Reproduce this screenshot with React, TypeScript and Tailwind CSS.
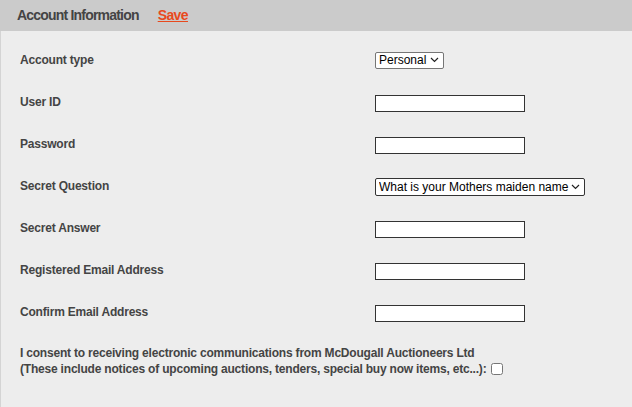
import React from 'react';

const labelCls = "text-[12px] font-bold text-[#444] tracking-[-0.2px]";
const inputCls = "block w-[150px] h-[17px] bg-white border border-[#333] outline-none";

function Chevron() {
  return (
    <svg className="absolute right-[5px] top-1/2 -translate-y-1/2 pointer-events-none" width="9" height="6" viewBox="0 0 9 6" fill="none">
      <path d="M1 1l3.5 3.5L8 1" stroke="#222" strokeWidth="1.2" />
    </svg>
  );
}

export default function App() {
  const textRows = ["User ID", "Password"];
  const moreRows = ["Secret Answer", "Registered Email Address", "Confirm Email Address"];

  return (
    <div className="w-[632px] h-[407px] bg-[#ededed] font-['Liberation_Sans',Arial,sans-serif] text-[#444] overflow-hidden">
      <div className="h-[31px] bg-[#cbcbcb] flex items-center pl-[17px] gap-[19px]">
        <span className="text-[14px] font-bold tracking-[-0.8px] text-[#444]">Account Information</span>
        <a href="#" className="text-[14px] font-bold tracking-[-0.6px] text-[#e8491d] underline">Save</a>
      </div>

      <div className="border-l border-[#d4d4d4] h-[376px] pt-[8px] pl-[19px]">
        <div className="grid grid-cols-[355px_1fr] auto-rows-[42px] items-center">
          <span className={labelCls}>Account type</span>
          <div className="relative w-[69px] h-[17px]">
            <select className="block appearance-none w-full h-full pl-[3px] bg-white border border-[#767676] rounded-[2px] text-[12px] leading-[15px] text-black outline-none" defaultValue="Personal">
              <option>Personal</option>
              <option>Business</option>
            </select>
            <Chevron />
          </div>

          {textRows.map((r) => (
            <React.Fragment key={r}>
              <span className={labelCls}>{r}</span>
              <div className="pt-[2px]"><input type={r === "Password" ? "password" : "text"} className={inputCls} /></div>
            </React.Fragment>
          ))}

          <span className={labelCls}>Secret Question</span>
          <div className="relative w-[210px] h-[18px] mt-[2px]">
            <select className="block appearance-none w-full h-full pl-[3px] bg-white border border-[#333] rounded-[2px] text-[12px] leading-[16px] text-black outline-none" defaultValue="m">
              <option value="m">What is your Mothers maiden name</option>
              <option value="p">What was your first pet's name</option>
            </select>
            <Chevron />
          </div>

          {moreRows.map((r) => (
            <React.Fragment key={r}>
              <span className={labelCls}>{r}</span>
              <div className="pt-[2px]"><input type="text" className={inputCls} /></div>
            </React.Fragment>
          ))}
        </div>

        <div className={`${labelCls} mt-[12px] leading-[16px] text-[#333]`}>
          <p>I consent to receiving electronic communications from McDougall Auctioneers Ltd</p>
          <p className="flex items-center">
            (These include notices of upcoming auctions, tenders, special buy now items, etc...):
            <input type="checkbox" className="ml-[5px] w-[12px] h-[12px]" />
          </p>
        </div>
      </div>
    </div>
  );
}
